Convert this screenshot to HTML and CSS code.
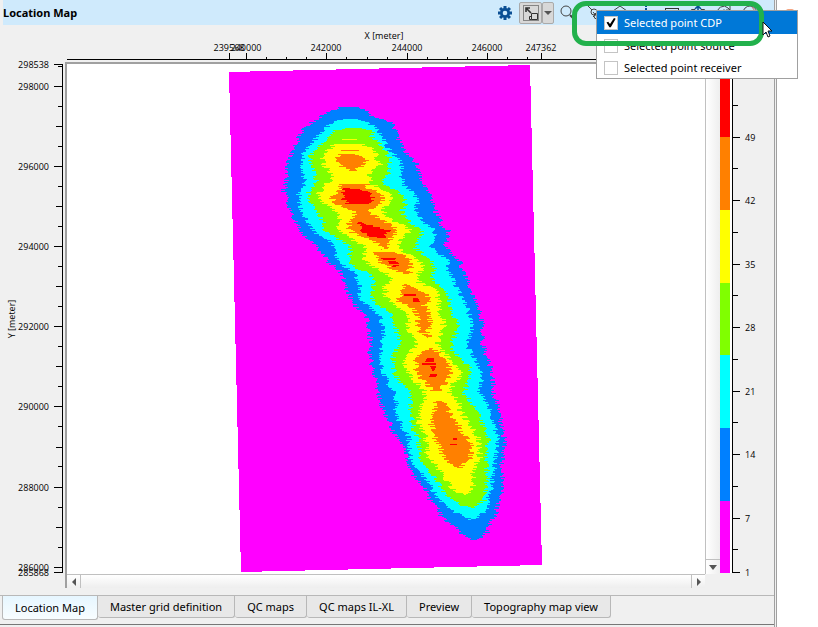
FILE: index.html
```html
<!DOCTYPE html>
<html lang="en">
<head>
<meta charset="utf-8">
<title>Location Map</title>
<link rel="stylesheet" href="styles.css">
<script src="map.js" defer></script>
</head>
<body>
<div class="window">
  <main class="panel">
    <header class="titlebar">
      <h1>Location Map</h1>
      <div class="toolbar">
        <button class="tool" aria-label="Settings"><svg width="16" height="16" viewBox="-8 -8 16 16"><g fill="#0b4f94"><circle r="5"/><g id="teeth"><rect x="-1.5" y="-7" width="3" height="14"/><rect x="-7" y="-1.5" width="14" height="3"/></g><use href="#teeth" transform="rotate(45)"/></g><circle r="2.3" fill="#cfeafc"/></svg></button>
        <div class="split">
          <button class="split-main" aria-label="Select points"><svg width="20" height="20" viewBox="0 0 20 20" fill="none" stroke="#333"><rect x="2.5" y="2.5" width="15" height="15" stroke-dasharray="1 1"/><path d="M5 5l5 5M5 9V5h4" stroke-width="1.6"/><path d="M10.500 10.500h6v6h-6z"/><path d="M10.500 13.500h-2v3h2"/></svg></button>
          <button class="split-arrow" aria-label="Selection options"><svg width="8" height="4" viewBox="0 0 8 4"><path d="M0 0h8L4 4z" fill="#555"/></svg></button>
        </div>
        <button class="tool" aria-label="Zoom"><svg width="16" height="18" viewBox="0 0 16 18" fill="none" stroke="#444"><circle cx="6" cy="7" r="5"/><path d="M10 11l4 4" stroke-width="2"/></svg></button>
        <button class="tool" aria-label="Polyline"><svg width="18" height="18" viewBox="0 0 18 18" fill="none" stroke="#444"><path d="M2 1l5 5M8 8l5 6M8 13l6-6"/><circle cx="9" cy="8" r="3"/><circle cx="12" cy="12" r="3"/></svg></button>
        <button class="tool" aria-label="Polygon"><svg width="18" height="18" viewBox="0 0 18 18" fill="none" stroke="#444"><path d="M2 7l7-5 7 5-3 8H5z"/></svg></button>
        <button class="tool" aria-label="Information"><svg width="18" height="18" viewBox="0 0 18 18" fill="#0b4f94"><path d="M8 1h2v2H8zM8 4h2v2H8zM8 7h2v9H8z"/></svg></button>
        <button class="tool" aria-label="Rectangle"><svg width="18" height="18" viewBox="0 0 18 18" fill="none" stroke="#333"><rect x="2.500" y="4.500" width="13" height="10"/></svg></button>
        <button class="tool" aria-label="Move"><svg width="18" height="18" viewBox="0 0 18 18" fill="none" stroke="#0b4f94"><path d="M6 5.500H2.500V15h13V5.500H12" stroke="#444"/><path d="M9 15V2M6 5l3-3 3 3" stroke-width="1.6"/></svg></button>
        <button class="tool" aria-label="Rotate"><svg width="18" height="18" viewBox="0 0 18 18" fill="none" stroke="#444"><path d="M3 10A6 6 0 0 1 13 4l2 2M15 2v4h-4"/><circle cx="9" cy="8" r="2"/></svg></button>
        <button class="tool" aria-label="Reset"><svg width="18" height="18" viewBox="0 0 18 18" fill="none" stroke="#444"><circle cx="9" cy="9" r="7"/><path d="M11 3l3 4" stroke="#c66"/></svg></button>

        <div class="menu">
          <label class="item selected"><input type="checkbox" checked>Selected point CDP</label>
          <label class="item"><input type="checkbox">Selected point source</label>
          <label class="item"><input type="checkbox">Selected point receiver</label>
        </div>
        <div class="marker"></div>
        <svg class="pointer" width="12" height="18" viewBox="0 0 12 18"><path d="M1 1v13l3-3 2 5 2-1-2-5h4z" fill="#fff" stroke="#111"/></svg>
        <span class="spark"></span>
      </div>
    </header>

    <section class="chart">
      <svg class="x-axis" viewBox="67 25 653 37" preserveAspectRatio="xMinYMin meet">
        <text class="axis-label middle" x="384" y="39">X [meter]</text>
        <g id="x-scale"></g>
      </svg>
      <svg class="y-axis" viewBox="0 62 65 526" preserveAspectRatio="xMinYMin meet">
        <text class="axis-label middle" transform="translate(15 319) rotate(-90)">Y [meter]</text>
        <g id="y-scale"></g>
      </svg>
      <div class="view">
        <svg class="map" viewBox="67 64 638 510" preserveAspectRatio="xMinYMin meet" shape-rendering="crispEdges">
          <path d="M229 72L530 65L542 565L241 572z" fill="#f0f"/>
          <g id="contours"></g>
        </svg>
        <div class="scroll-v"><button aria-label="Scroll down"><svg width="8" height="5" viewBox="0 0 8 5"><path d="M0 0h8L4 5z" fill="#555"/></svg></button></div>
        <div class="scroll-h">
          <button aria-label="Scroll left"><svg width="4" height="8" viewBox="0 0 4 8"><path d="M4 0v8L0 4z" fill="#555"/></svg></button>
          <button aria-label="Scroll right"><svg width="4" height="8" viewBox="0 0 4 8"><path d="M0 0v8l4-4z" fill="#555"/></svg></button>
        </div>
      </div>
      <svg class="legend" viewBox="720 62 54 526" preserveAspectRatio="xMinYMin meet">
        <g shape-rendering="crispEdges">
          <rect x="730" y="64" width="2" height="509" fill="#fff"/>
          <rect x="720" y="64" width="10" height="73" fill="#f00"/>
          <rect x="720" y="137" width="10" height="73" fill="#ff8000"/>
          <rect x="720" y="210" width="10" height="73" fill="#ff0"/>
          <rect x="720" y="283" width="10" height="72" fill="#80ff00"/>
          <rect x="720" y="355" width="10" height="73" fill="#0ff"/>
          <rect x="720" y="428" width="10" height="73" fill="#0080ff"/>
          <rect x="720" y="501" width="10" height="72" fill="#f0f"/>
        </g>
        <g id="legend-scale"></g>
      </svg>
    </section>

    <nav class="tabs">
      <button class="tab active">Location Map</button>
      <button class="tab">Master grid definition</button>
      <button class="tab">QC maps</button>
      <button class="tab">QC maps IL-XL</button>
      <button class="tab">Preview</button>
      <button class="tab">Topography map view</button>
    </nav>
    <div class="foot"></div>
  </main>
</div>
</body>
</html>
```
FILE: styles.css
```css
* { box-sizing: border-box; }
body {
  margin: 0;
  background: #fff;
  color: #000;
  font: 11px/16px "Noto Sans", "Open Sans", sans-serif;
}
button { font: inherit; color: inherit; margin: 0; padding: 0; border: 0; background: none; }
svg { display: block; }
.window { padding-right: 41px; overflow: hidden; }
.panel {
  position: relative;
  background: #f0f0f0;
  border-right: 3px double #a0a0a0;
}
.titlebar {
  display: flex;
  justify-content: space-between;
  align-items: center;
  height: 25px;
  margin-left: 3px;
  background: #cfeafc;
}
h1 { margin: 0; font-size: 11px; line-height: 24px; font-weight: 700; }
.toolbar { position: relative; display: flex; align-items: center; gap: 2px; height: 25px; padding-right: 12px; }
.tool { display: flex; align-items: center; justify-content: center; width: 24px; height: 24px; }
.split { display: flex; height: 22px; }
.split button { display: flex; align-items: center; justify-content: center; background: #d8d8d8; border: 1px solid #aaa; border-radius: 2px; }
.split-main { width: 23px; }
.split-arrow { width: 12px; }
.menu {
  position: absolute;
  top: 10px;
  right: -24px;
  z-index: 2;
  width: 202px;
  line-height: 14px;
  background: #fff;
  border: 1px solid #a0a0a0;
}
.item { display: flex; align-items: center; gap: 6px; height: 23px; padding-left: 7px; white-space: nowrap; }
.item:last-child { height: 21px; }
.selected { background: #0078d7; color: #fff; }
.item input {
  appearance: none;
  display: grid;
  place-items: center;
  width: 14px;
  height: 14px;
  margin: 0;
  background: #fff;
  border: 1px solid #c4c4c4;
}
.item input:checked::after {
  content: "";
  width: 10px;
  height: 10px;
  background: #000;
  clip-path: polygon(5% 50%, 22% 42%, 40% 66%, 80% 5%, 97% 12%, 48% 98%, 34% 98%);
}
.marker {
  position: absolute;
  top: 1px;
  right: 10px;
  z-index: 3;
  width: 192px;
  height: 45px;
  border: 5px solid #22b14c;
  border-radius: 14px;
}
.pointer { position: absolute; top: 21px; right: 0; z-index: 4; }
.spark {
  position: absolute;
  top: 9px;
  right: -20px;
  width: 8px;
  height: 4px;
  border-radius: 4px;
  background: #f4a582;
}

.chart { display: grid; grid-template-columns: 65px minmax(0, 1fr) 54px; grid-template-rows: 37px auto; }
.x-axis { grid-column: 2 / 3; width: calc(100% - 2px); height: 37px; margin-left: 2px; overflow: visible; }
.y-axis { grid-column: 1; width: 65px; height: 526px; overflow: visible; }
.legend { width: 54px; height: 526px; }
.axis-label { font: 9px "Open Sans", "Noto Sans", sans-serif; }
.middle { text-anchor: middle; }
.end { text-anchor: end; }
.view {
  display: grid;
  grid-template-columns: minmax(0, 1fr) 15px;
  border-top: 2px solid #a0a0a0;
  border-left: 2px solid #a0a0a0;
}
.map { width: 100%; height: 510px; background: #fff; }
.scroll-v {
  display: flex;
  align-items: flex-end;
  border-left: 1px solid #c0c0c0;
  background: linear-gradient(90deg, #fff, #eee);
}
.scroll-v button { display: grid; place-items: center; width: 100%; height: 15px; border-top: 1px solid #c0c0c0; }
.scroll-h {
  display: flex;
  justify-content: space-between;
  height: 14px;
  border-top: 1px solid #c0c0c0;
  background: linear-gradient(#fff, #eee);
}
.scroll-h button { display: grid; place-items: center; width: 14px; border-right: 1px solid #c0c0c0; }
.scroll-h button:last-child { border-right: 0; border-left: 1px solid #c0c0c0; }

.tabs {
  display: flex;
  align-items: flex-start;
  height: 29px;
  margin-top: 7px;
  padding-left: 2px;
  border-top: 1px solid #b8b8b8;
}
.tab {
  height: 22px;
  padding: 0 12px;
  background: #e8e8e8;
  border: 1px solid #b8b8b8;
  border-width: 0 1px 1px 0;
  border-radius: 0 0 3px 3px;
  white-space: nowrap;
}
.active { height: 24px; border-left-width: 1px; background: linear-gradient(#e6f6ff, #f8fdff); }
.foot { height: 3px; border-top: 1px solid #777; }
```
FILE: map.js
```js
// Contour bands: each row is [y, left, right]; rows in between are interpolated.
const bands = [
  { fill: "#0080ff", amp: 6, shapes: [[[107,340,358],[111,330,370],[115,323,370],[118,317,379],[122,312,392],[128,304,393],[133,301,399],[140,298,399],[146,295,402],[152,292,406],[158,289,413],[165,287,417],[180,287,422],[190,284,428],[198,286,432],[205,288,433],[212,291,436],[219,294,440],[225,298,441],[230,300,448],[240,309,447],[246,316,445],[250,320,449],[256,325,454],[262,328,460],[268,338,462],[275,342,465],[283,346,469],[290,347,471],[298,351,474],[305,355,478],[310,361,479],[318,367,482],[326,369,482],[345,371,483],[352,369,485],[358,371,488],[365,372,490],[372,374,492],[380,376,493],[397,379,494],[402,381,497],[410,383,499],[417,387,500],[425,391,502],[433,393,503],[440,399,505],[448,404,504],[455,406,503],[463,407,501],[470,411,502],[478,415,502],[485,423,502],[492,426,501],[500,430,499],[508,437,497],[515,441,495],[520,446,492],[526,455,488],[532,460,487],[537,467,481],[539,470,478]]] },
  { fill: "#00ffff", amp: 6, shapes: [[[119,343,357],[122,332,369],[126,328,373],[130,322,378],[136,317,383],[142,313,385],[148,308,388],[153,303,393],[163,302,402],[172,302,401],[180,304,402],[188,302,407],[194,299,415],[200,298,417],[208,301,417],[214,303,417],[222,308,424],[228,312,434],[233,317,434],[240,330,432],[246,334,430],[253,336,440],[260,337,447],[266,345,448],[272,354,449],[280,358,453],[287,360,456],[295,358,461],[303,364,465],[308,372,467],[316,379,470],[326,383,473],[336,383,470],[346,382,467],[353,380,472],[360,380,475],[368,382,480],[376,385,481],[384,388,481],[391,394,480],[398,396,484],[405,396,488],[412,396,490],[420,399,493],[428,403,495],[436,409,497],[453,410,497],[460,410,495],[468,416,494],[476,424,493],[484,430,492],[490,433,491],[498,437,489],[505,447,487],[511,453,485],[516,464,479],[519,470,473]]] },
  { fill: "#80ff00", amp: 6, shapes: [[[128,344,360],[130,336,373],[136,330,372],[142,325,378],[148,317,383],[153,311,387],[158,310,390],[165,312,389],[173,314,388],[180,316,384],[187,312,388],[192,309,400],[198,308,405],[204,311,405],[210,315,402],[217,321,405],[224,324,412],[230,325,421],[235,332,421],[241,343,417],[247,351,415],[255,350,425],[262,350,432],[268,358,434],[274,370,432],[281,374,432],[286,374,441],[292,372,448],[300,372,450],[306,380,449],[312,391,452],[322,394,457],[332,397,457],[341,400,452],[349,396,452],[357,393,460],[365,393,468],[373,395,471],[381,399,469],[388,407,465],[394,411,465],[400,411,470],[410,411,477],[420,412,481],[430,414,486],[440,419,489],[448,419,487],[456,420,486],[463,424,487],[470,429,487],[478,436,487],[486,441,486],[494,445,485],[500,452,484],[504,460,477],[507,468,472]]] },
  { fill: "#ffff00", amp: 7, shapes: [[[139,342,357],[139,342,357]],[[144,333,362],[148,331,371],[153,325,377],[159,322,377],[165,325,380],[170,328,373],[175,333,370],[180,333,370],[183,324,371],[188,323,382],[193,319,392],[198,321,394],[203,325,390],[208,332,383],[213,338,385],[219,339,390],[224,338,402],[230,340,412],[235,346,404],[240,354,399],[245,363,398],[252,365,405],[258,363,416],[264,370,422],[270,380,421],[275,390,417],[282,390,419],[285,384,426],[290,386,436],[296,384,438],[302,393,439],[308,400,439],[314,406,441],[322,408,444],[330,408,443],[337,412,439],[344,417,437],[349,412,441],[357,406,449],[364,405,456],[370,407,461],[378,413,458],[385,419,452],[392,425,450],[400,424,458],[408,421,460],[415,419,463],[422,418,468],[430,424,473],[438,426,478],[446,427,479],[455,427,480],[462,433,477],[470,440,473],[478,446,474],[485,450,473],[490,455,470],[494,462,469]]] },
  { fill: "#ff8000", amp: 7, shapes: [
    [[150,341,359],[150,341,359]],
    [[154,340,358],[156,337,365],[160,335,366],[164,338,363],[167,343,360],[170,350,354]],
    [[184,340,367],[188,340,368],[191,337,377],[196,332,383],[201,334,383],[206,340,377],[210,353,370],[214,354,372],[218,353,380],[222,350,386],[227,348,396],[232,352,398],[236,363,393],[240,372,390],[244,380,387],[249,382,385]],
    [[252,374,397],[255,375,404],[260,378,411],[265,386,411],[270,395,409],[273,405,410]],
    [[284,403,410],[289,404,420],[294,400,428],[300,397,428],[305,408,424],[310,415,429],[316,418,428],[322,417,430],[327,418,429],[332,421,427],[337,428,430]],
    [[348,427,434],[354,421,440],[360,416,447],[370,416,451],[378,421,448],[384,427,444],[390,433,440]],
    [[401,434,445],[406,435,448],[412,433,449],[417,432,452],[422,431,458],[428,433,460],[436,434,466],[442,437,471],[450,441,471],[458,443,470],[463,451,465],[467,457,460]]] },
  { fill: "#ff0000", amp: 6, shapes: [
    [[188,345,350],[190,343,365],[194,342,372],[198,343,373],[203,347,372]],
    [[222,359,363],[226,359,375],[230,362,388],[234,366,387],[237,374,384]],
    [[258,381,396],[259,383,395]], [[261,388,396],[263,389,399]], [[265,393,399],[266,392,396]],
    [[294,404,416],[295,404,416]], [[298,413,418],[301,413,420]],
    [[358,427,434],[361,425,434]], [[363,422,436],[364,422,436]], [[366,430,436],[370,432,434]], [[374,430,437],[376,429,436]],
    [[438,453,457],[439,453,457]], [[444,450,457],[444,450,457]]] }
];

const noise = n => {
  const v = Math.sin(n * 127.1) * 43758.5453;
  return v - Math.floor(v) - 0.5;
};

function bandPath(shapes, bandAmp, seed) {
  let d = "";
  for (const rows of shapes) {
    const amp = rows[rows.length - 1][0] - rows[0][0] < 5 ? 0 : bandAmp;
    for (let i = 0; i < rows.length - 1; i++) {
      const [y0, l0, r0] = rows[i];
      const [y1, l1, r1] = rows[i + 1];
      const last = i === rows.length - 2 ? y1 : y1 - 1;
      for (let y = y0; y <= last; y++) {
        const t = y1 > y0 ? (y - y0) / (y1 - y0) : 0;
        const left = Math.round(l0 + (l1 - l0) * t + amp * noise(y + seed * 611));
        const right = Math.round(r0 + (r1 - r0) * t + amp * noise(y + seed * 977 + 300));
        if (right > left) d += `M${left} ${y}H${right}v1H${left}z`;
      }
    }
  }
  return d;
}

document.getElementById("contours").innerHTML =
  bands.map((b, i) => `<path fill="${b.fill}" d="${bandPath(b.shapes, b.amp, i + 1)}"/>`).join("");

const box = (x, y, w, h) => `<rect x="${x}" y="${y}" width="${w}" height="${h}"/>`;
const label = (x, y, text, cls = "") => `<text class="axis-label ${cls}" x="${x}" y="${y}">${text}</text>`;

const xMajor = [[229, 239568], [246, 240000], [326, 242000], [407, 244000], [487, 246000], [541, 247362]];
const xMinor = [266, 286, 306, 346, 367, 387, 427, 447, 467, 507, 527];
document.getElementById("x-scale").innerHTML = box(67, 59, 653, 1) +
  xMajor.map(([x, n]) => box(x, 53, 1, 6) + label(x, 51, n, "middle")).join("") +
  xMinor.map(x => box(x, 57, 1, 2)).join("");

const yMajor = [[64, 298538], [86, 298000], [166, 296000], [246, 294000], [326, 292000], [406, 290000], [487, 288000], [567, 286000], [572, 285868]];
const yMinor = [66];
yMajor.slice(1, 8).forEach(([y]) => { if (y < 560) yMinor.push(y + 20, y + 60); });
const yMiddle = [126, 206, 286, 366, 447, 527];
document.getElementById("y-scale").innerHTML = box(62, 64, 1, 509) +
  yMajor.map(([y, n]) => box(54, y, 8, 1) + label(49, y + 4, n, "end")).join("") +
  yMinor.map(y => box(58, y, 4, 1)).join("") + yMiddle.map(y => box(56, y, 6, 1)).join("");

const values = [[137, 49], [200, 42], [264, 35], [327, 28], [391, 21], [454, 14], [518, 7], [572, 1]];
document.getElementById("legend-scale").innerHTML = box(732, 64, 1, 509) +
  values.map(([y, n]) => box(733, y, 7, 1) + label(745, y + 4, n)).join("") +
  [105, 168, 232, 295, 359, 422, 486, 549].map(y => box(733, y, 5, 1)).join("");
```
